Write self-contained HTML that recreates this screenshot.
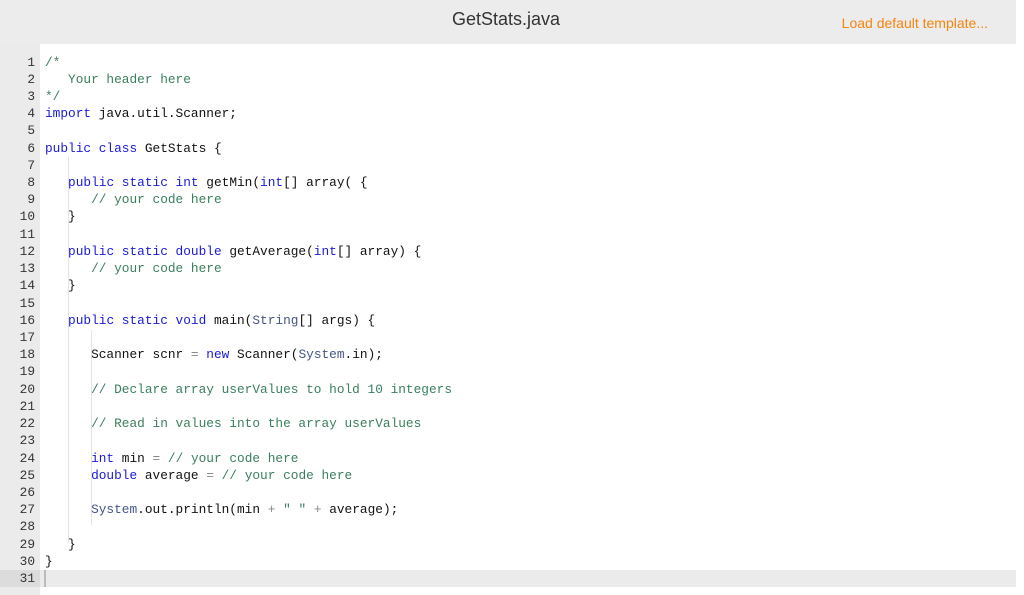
<!DOCTYPE html>
<html><head><meta charset="utf-8"><style>
body{margin:0;width:1024px;height:595px;background:#fff;overflow:hidden;position:relative;font-family:"Liberation Sans",sans-serif}
.hdr{position:absolute;left:0;top:0;width:1016px;height:44px;background:#ececec}
.title{position:absolute;left:0;width:1012px;top:9px;text-align:center;font-size:18px;color:#333}
.load{position:absolute;right:28px;top:15px;font-size:14px;color:#f5850f}
.gut{position:absolute;left:0;top:44px;width:40px;height:551px;background:#ebebeb}
.code{position:absolute;left:0;top:53.5px;width:1016px;font-family:"Liberation Mono",monospace;font-size:12.8px;line-height:17.23px;color:#111}
.l{height:17.23px;white-space:pre;position:relative}
.n{display:inline-block;width:35px;text-align:right;color:#333;margin-right:10px}
.k{color:#1a1ad6}.c{color:#3a7f5f}.s{color:#445588}.o{color:#888}
.act{background:#ebebeb}
.act .n{background:#dcdcdc;margin-right:0;width:35px;padding-right:5px}
.cur{display:inline-block;width:2px;height:17px;background:#bbb;vertical-align:top;margin-left:4px}
.g{position:absolute;width:1px;background:#e4e4e4}
</style></head><body>
<div class="hdr"><div class="title">GetStats.java</div><div class="load">Load default template...</div></div>
<div class="gut"></div>
<div class="g" style="left:68px;top:157px;height:385px"></div>
<div class="g" style="left:91px;top:330px;height:195px"></div>
<div class="code">
<div class="l"><span class="n">1</span><span class="c">/*</span></div>
<div class="l"><span class="n">2</span><span class="c">   Your header here</span></div>
<div class="l"><span class="n">3</span><span class="c">*/</span></div>
<div class="l"><span class="n">4</span><span class="k">import</span> java.util.Scanner;</div>
<div class="l"><span class="n">5</span></div>
<div class="l"><span class="n">6</span><span class="k">public class</span> GetStats {</div>
<div class="l"><span class="n">7</span></div>
<div class="l"><span class="n">8</span>   <span class="k">public static int</span> getMin(<span class="k">int</span>[] array( {</div>
<div class="l"><span class="n">9</span>      <span class="c">// your code here</span></div>
<div class="l"><span class="n">10</span>   }</div>
<div class="l"><span class="n">11</span></div>
<div class="l"><span class="n">12</span>   <span class="k">public static double</span> getAverage(<span class="k">int</span>[] array) {</div>
<div class="l"><span class="n">13</span>      <span class="c">// your code here</span></div>
<div class="l"><span class="n">14</span>   }</div>
<div class="l"><span class="n">15</span></div>
<div class="l"><span class="n">16</span>   <span class="k">public static void</span> main(<span class="s">String</span>[] args) {</div>
<div class="l"><span class="n">17</span></div>
<div class="l"><span class="n">18</span>      Scanner scnr <span class="o">=</span> <span class="k">new</span> Scanner(<span class="s">System</span>.in);</div>
<div class="l"><span class="n">19</span></div>
<div class="l"><span class="n">20</span>      <span class="c">// Declare array userValues to hold 10 integers</span></div>
<div class="l"><span class="n">21</span></div>
<div class="l"><span class="n">22</span>      <span class="c">// Read in values into the array userValues</span></div>
<div class="l"><span class="n">23</span></div>
<div class="l"><span class="n">24</span>      <span class="k">int</span> min <span class="o">=</span> <span class="c">// your code here</span></div>
<div class="l"><span class="n">25</span>      <span class="k">double</span> average <span class="o">=</span> <span class="c">// your code here</span></div>
<div class="l"><span class="n">26</span></div>
<div class="l"><span class="n">27</span>      <span class="s">System</span>.out.println(min <span class="o">+</span> <span class="c">" "</span> <span class="o">+</span> average);</div>
<div class="l"><span class="n">28</span></div>
<div class="l"><span class="n">29</span>   }</div>
<div class="l"><span class="n">30</span>}</div>
<div class="l act"><span class="n">31</span><span class="cur"></span></div>
</div>
</body></html>
